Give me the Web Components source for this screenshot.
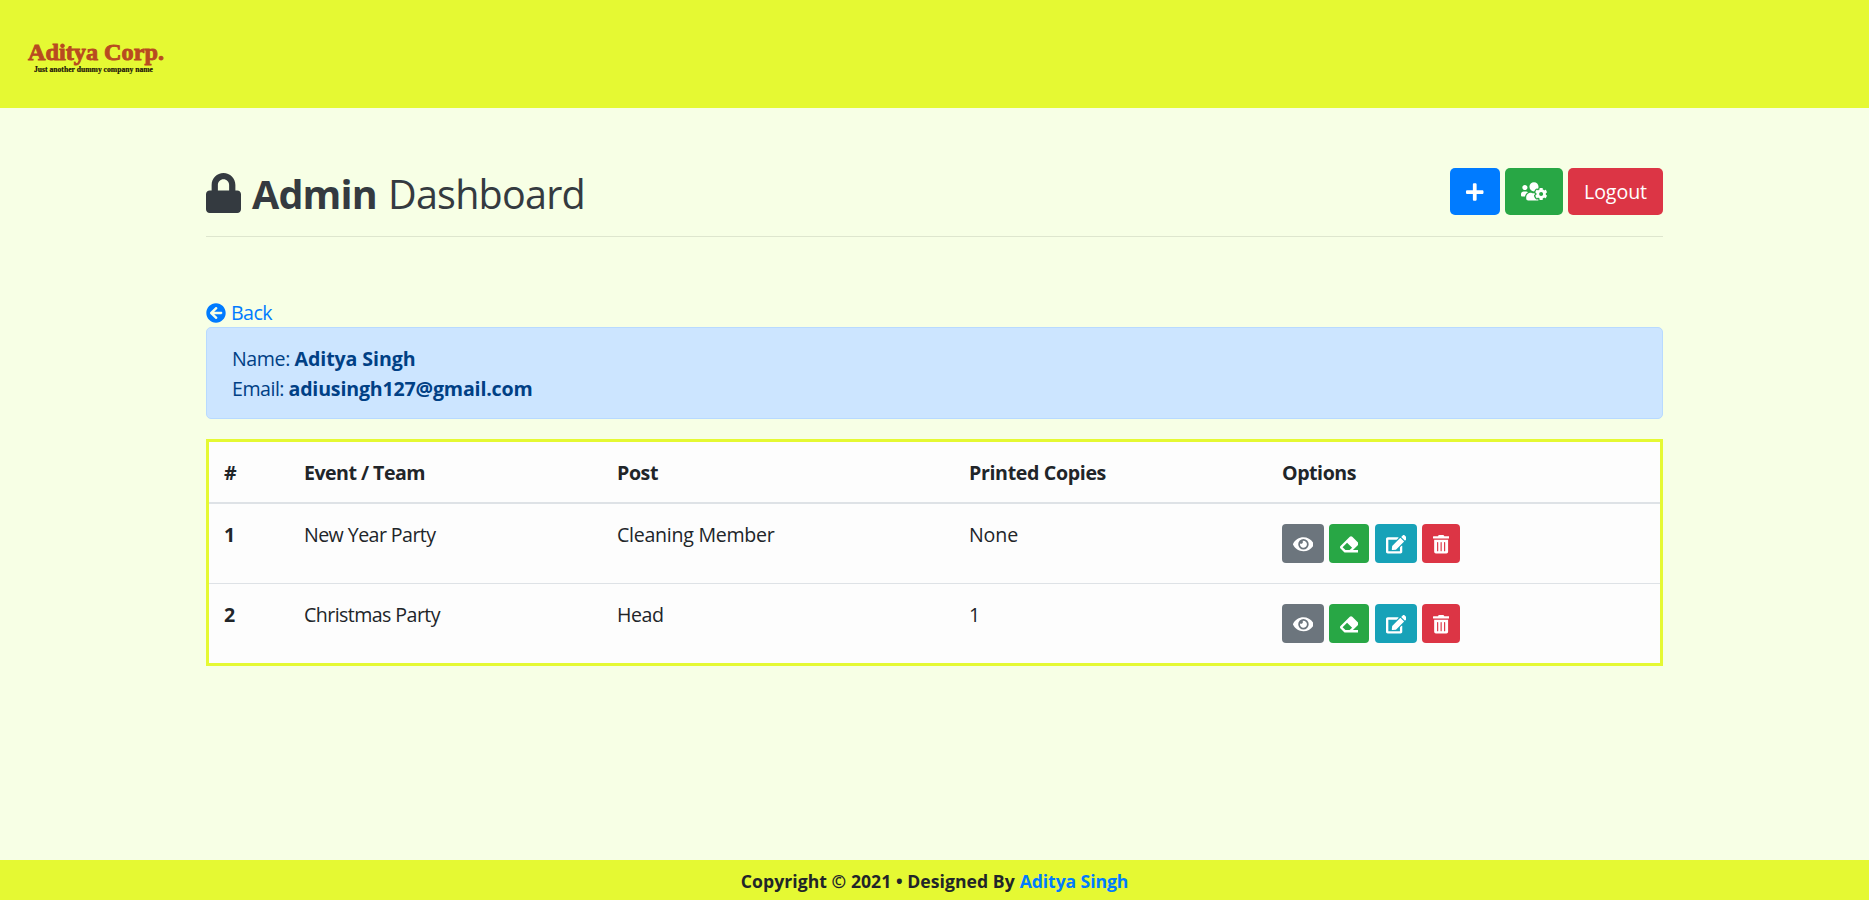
<!DOCTYPE html>
<html lang="en">
<head>
<meta charset="utf-8">
<title>Admin Dashboard</title>
<style>
html,body{margin:0;height:100%}
body{background:#f7ffe5;color:#212529;font:385 19.6px/30px "Open Sans","Noto Sans",sans-serif;overflow:hidden}
</style>
</head>
<body>
<admin-page></admin-page>
<script>
const define = (name, html, setup) => {
  const t = document.createElement('template');
  t.innerHTML = html;
  customElements.define(name, class extends HTMLElement {
    connectedCallback() {
      if (this.shadowRoot) return;
      this.attachShadow({mode: 'open'}).append(t.content.cloneNode(true));
      if (setup) setup(this, this.shadowRoot);
    }
  });
};

const icons = {
  lock: [448, 512, 'M400 224h-24v-72C376 68.2 307.800 0 224 0S72 68.200 72 152v72H48c-26.500 0-48 21.500-48 48v192c0 26.500 21.500 48 48 48h352c26.500 0 48-21.500 48-48V272c0-26.500-21.500-48-48-48zm-104 0H152v-72c0-39.700 32.300-72 72-72s72 32.300 72 72v72z'],
  plus: [448, 512, 'M416 208H272V64c0-17.670-14.330-32-32-32h-32c-17.670 0-32 14.330-32 32v144H32c-17.670 0-32 14.330-32 32v32c0 17.670 14.330 32 32 32h144v144c0 17.670 14.330 32 32 32h32c17.670 0 32-14.330 32-32V304h144c17.670 0 32-14.330 32-32v-32c0-17.670-14.330-32-32-32z'],
  users: [640, 512, 'M610.500 341.300c2.600-14.100 2.600-28.500 0-42.600l25.800-14.900c3-1.700 4.300-5.200 3.300-8.500-6.700-21.600-18.200-41.200-33.200-57.400-2.300-2.500-6-3.100-9-1.400l-25.800 14.900c-10.900-9.300-23.400-16.500-36.900-21.300v-29.800c0-3.400-2.400-6.400-5.700-7.100-22.300-5-45-4.800-66.200 0-3.300.7-5.700 3.700-5.700 7.100v29.800c-13.500 4.800-26 12-36.900 21.300l-25.800-14.900c-2.900-1.700-6.700-1.100-9 1.400-15 16.200-26.500 35.800-33.200 57.400-1 3.300.4 6.800 3.300 8.500l25.800 14.900c-2.600 14.100-2.600 28.500 0 42.600l-25.800 14.900c-3 1.700-4.300 5.200-3.300 8.500 6.700 21.600 18.200 41.100 33.200 57.400 2.300 2.500 6 3.100 9 1.400l25.800-14.900c10.900 9.300 23.400 16.500 36.900 21.300v29.800c0 3.400 2.400 6.400 5.700 7.100 22.300 5 45 4.800 66.200 0 3.300-.7 5.700-3.700 5.700-7.100v-29.800c13.500-4.800 26-12 36.900-21.300l25.800 14.900c2.900 1.700 6.700 1.100 9-1.400 15-16.200 26.500-35.800 33.200-57.400 1-3.300-.4-6.800-3.300-8.500l-25.800-14.900zM496 368.500c-26.800 0-48.500-21.800-48.500-48.500s21.800-48.500 48.500-48.500 48.500 21.800 48.500 48.500-21.700 48.500-48.500 48.500zM96 224c35.300 0 64-28.700 64-64s-28.700-64-64-64-64 28.700-64 64 28.700 64 64 64zm224 32c1.900 0 3.700-.5 5.600-.6 8.300-21.700 20.500-42.100 36.300-59.200 7.400-8 17.900-12.600 28.900-12.600 6.900 0 13.700 1.800 19.600 5.300l7.900 4.600c.8-.5 1.600-.9 2.400-1.400 7-14.600 11.200-30.800 11.200-48 0-61.900-50.100-112-112-112S208 82.100 208 144c0 61.900 50.100 112 112 112zm105.200 194.500c-2.300-1.200-4.600-2.600-6.800-3.900-8.200 4.800-15.300 9.800-27.500 9.800-10.900 0-21.400-4.600-28.900-12.600-18.300-19.800-32.300-43.900-40.200-69.600-10.700-34.500 24.900-49.700 25.800-50.300-.1-2.600-.1-5.200 0-7.800l-7.900-4.600c-3.800-2.200-7-5-9.800-8.100-3.300.2-6.500.6-9.800.6-24.600 0-47.600-6-68.500-16h-8.300C179.600 288 128 339.600 128 403.200V432c0 26.500 21.500 48 48 48h255.400c-3.700-6-6.200-12.800-6.200-20.300v-9.200zM173.100 274.600C161.500 263.100 145.600 256 128 256H64c-35.300 0-64 28.700-64 64v32c0 17.700 14.300 32 32 32h65.900c6.300-47.400 34.900-87.300 75.200-109.400z'],
  back: [512, 512, 'M256 504C119 504 8 393 8 256S119 8 256 8s248 111 248 248-111 248-248 248zm28.900-143.600L209.400 288H392c13.300 0 24-10.700 24-24v-16c0-13.300-10.700-24-24-24H209.400l75.500-72.400c9.700-9.300 9.900-24.800.4-34.300l-11-10.900c-9.400-9.400-24.600-9.400-33.900 0L107.700 239c-9.400 9.400-9.400 24.600 0 33.900l132.700 132.700c9.400 9.400 24.600 9.400 33.900 0l11-10.900c9.500-9.500 9.300-25-.4-34.300z'],
  eye: [576, 512, 'M572.520 241.400C518.290 135.590 410.930 64 288 64S57.680 135.640 3.480 241.410a32.350 32.350 0 0 0 0 29.190C57.710 376.410 165.070 448 288 448s230.320-71.640 284.520-177.410a32.350 32.350 0 0 0 0-29.190zM288 400a144 144 0 1 1 144-144 143.930 143.930 0 0 1-144 144zm0-240a95.310 95.310 0 0 0-25.310 3.790 47.850 47.850 0 0 1-66.900 66.900A95.780 95.780 0 1 0 288 160z'],
  eraser: [512, 512, 'M497.941 273.941c18.745-18.745 18.745-49.137 0-67.882l-160-160c-18.745-18.745-49.136-18.746-67.883 0l-256 256c-18.745 18.745-18.745 49.137 0 67.882l96 96A48.004 48.004 0 0 0 144 480h356c6.627 0 12-5.373 12-12v-40c0-6.627-5.373-12-12-12H355.883l142.058-142.059zm-302.627-62.627l137.373 137.373L265.373 416H150.628l-80-80 124.686-124.686z'],
  edit: [576, 512, 'M402.600 83.200l90.200 90.200c3.800 3.800 3.800 10 0 13.800L274.400 405.600l-92.800 10.300c-12.400 1.400-22.900-9.100-21.500-21.500l10.300-92.800L388.800 83.200c3.800-3.800 10-3.800 13.800 0zm162-22.900l-48.800-48.800c-15.200-15.200-39.900-15.200-55.200 0l-35.400 35.400c-3.800 3.800-3.800 10 0 13.800l90.200 90.200c3.800 3.800 10 3.800 13.800 0l35.400-35.400c15.200-15.300 15.200-40 0-55.200zM384 346.200V448H64V128h229.800c3.200 0 6.200-1.300 8.500-3.500l40-40c7.600-7.600 2.200-20.500-8.500-20.500H48C21.500 64 0 85.500 0 112v352c0 26.500 21.500 48 48 48h352c26.500 0 48-21.500 48-48V306.200c0-10.700-12.900-16-20.500-8.500l-40 40c-2.200 2.300-3.500 5.300-3.500 8.500z'],
  trash: [448, 512, 'M32 464a48 48 0 0 0 48 48h288a48 48 0 0 0 48-48V128H32zm272-256a16 16 0 0 1 32 0v224a16 16 0 0 1-32 0zm-96 0a16 16 0 0 1 32 0v224a16 16 0 0 1-32 0zm-96 0a16 16 0 0 1 32 0v224a16 16 0 0 1-32 0zM432 32H312l-9.400-18.700A24 24 0 0 0 281.100 0H166.800a23.720 23.720 0 0 0-21.400 13.300L136 32H16A16 16 0 0 0 0 48v32a16 16 0 0 0 16 16h416a16 16 0 0 0 16-16V48a16 16 0 0 0-16-16z']
};

define('ui-icon', `<style>:host{display:inline-block;flex:none}svg{display:block;height:var(--size,20px);fill:currentColor}</style>`, (el, root) => {
  const [w, h, d] = icons[el.getAttribute('name')];
  const s = document.createElement('span');
  s.innerHTML = `<svg viewBox="0 0 ${w} ${h}"><path d="${d}"/></svg>`;
  root.append(s.firstChild);
});

/* Text run tracked so that its advance equals the w attribute. */
define('ui-text', `<style>:host{display:inline-block;white-space:nowrap}</style><slot></slot>`, el => {
  const w = +el.getAttribute('w');
  el.style.letterSpacing = (w - el.getBoundingClientRect().width) / el.textContent.length + 'px';
});

define('ui-button', `<style>
:host{display:flex;align-items:center;justify-content:center;box-sizing:border-box;color:#fff;border-radius:5px;height:47px;font-weight:400;background:#007bff}
:host([kind=success]){background:#28a745}:host([kind=danger]){background:#dc3545}
:host([kind=secondary]){background:#6c757d}:host([kind=info]){background:#17a2b8}
:host([small]){height:39px;--size:18.6px;border-radius:4px;padding-top:2px}
</style><slot></slot>`);

define('site-header', `<style>:host{display:block;height:108px;background:#e5f933}svg{display:block}
.a{font:bold 24px "Liberation Serif",serif;fill:#b84a20;stroke:#b84a20;stroke-width:.9}
.b{font:bold 8px "Liberation Serif",serif;fill:#1a1208;stroke:#1a1208;stroke-width:.2}</style>
<svg width="200" height="108"><text class="a" x="28" y="60" textLength="136" lengthAdjust="spacingAndGlyphs">Aditya Corp.</text><text class="b" x="34" y="71.500" textLength="119" lengthAdjust="spacingAndGlyphs">Just another dummy company name</text></svg>`);

define('title-bar', `<style>
:host{display:flex;justify-content:space-between;height:68px;border-bottom:1px solid #dee6ce;box-sizing:content-box}
h1{margin:0;display:flex;color:#343a40;font-size:39.500px;font-weight:500;line-height:52px;--size:40px}
h1 ui-icon{margin:5px 11px 0 0}b{font-weight:700;margin-right:11px}
nav{display:flex;gap:5px}.p{width:50px}.u{width:58px;--size:20.800px}.l{width:95px}
</style><h1><ui-icon name="lock"></ui-icon><b><ui-text w="125">Admin</ui-text></b><ui-text w="197">Dashboard</ui-text></h1>
<nav><ui-button class="p"><ui-icon name="plus"></ui-icon></ui-button><ui-button class="u" kind="success"><ui-icon name="users"></ui-icon></ui-button><ui-button class="l" kind="danger"><ui-text w="63">Logout</ui-text></ui-button></nav>`);

define('back-link', `<style>:host{display:flex;align-items:center;gap:5px;height:30px;color:#007bff}</style><ui-icon name="back"></ui-icon><ui-text w="41">Back</ui-text>`);

define('user-card', `<style>:host{display:block;box-sizing:border-box;height:92px;padding:16px 25px 15px;border:1px solid #b8daff;border-radius:5px;background:#cce5ff;color:#004085}
div{display:flex;gap:4.500px;height:30px}b{font-weight:700}</style>
<div><ui-text w="58">Name:</ui-text><b><ui-text w="121">Aditya Singh</ui-text></b></div>
<div><ui-text w="52">Email:</ui-text><b><ui-text w="244">adiusingh127@gmail.com</ui-text></b></div>`);

define('table-row', `<style>:host{display:grid;grid-template-columns:80px 313px 352px 313px 1fr;box-sizing:border-box;height:80px;padding:16px 15px 0;border-top:1px solid #dee2e6}
:host([head]){height:62px;font-weight:700;border:0;border-bottom:2px solid #dee2e6;padding-top:15.500px}
:host([first]){border-top:0;height:79px;padding-top:16px}</style><slot></slot>`);

define('row-actions', `<style>:host{display:flex;gap:5px;padding-top:4px}.a{width:42px}.b{width:40px;margin-right:1px}.d{width:38px}</style>
<ui-button small class="a" kind="secondary"><ui-icon name="eye"></ui-icon></ui-button><ui-button small class="b" kind="success"><ui-icon name="eraser"></ui-icon></ui-button><ui-button small class="a" kind="info"><ui-icon name="edit"></ui-icon></ui-button><ui-button small class="d" kind="danger"><ui-icon name="trash"></ui-icon></ui-button>`);

define('event-table', `<style>:host{display:block;box-sizing:border-box;height:227px;border:3px solid #e5f933;background:#fdfdfd}b{font-weight:700}</style>
<table-row head><span><ui-text w="12">#</ui-text></span><span><ui-text w="121">Event / Team</ui-text></span><span><ui-text w="41">Post</ui-text></span><span><ui-text w="137">Printed Copies</ui-text></span><span><ui-text w="74">Options</ui-text></span></table-row>
<table-row first><b>1</b><span><ui-text w="131.500">New Year Party</ui-text></span><span><ui-text w="157.500">Cleaning Member</ui-text></span><span><ui-text w="49">None</ui-text></span><row-actions></row-actions></table-row>
<table-row><b>2</b><span><ui-text w="136">Christmas Party</ui-text></span><span><ui-text w="46.500">Head</ui-text></span><span>1</span><row-actions></row-actions></table-row>`);

define('site-footer', `<style>:host{display:flex;justify-content:center;gap:5px;height:40px;background:#e5f933;font-size:17.600px;font-weight:700;line-height:43px}a{color:#007bff}</style>
<ui-text w="274">Copyright © 2021 • Designed By</ui-text><a><ui-text w="108.500">Aditya Singh</ui-text></a>`);

define('admin-page', `<style>:host{display:flex;flex-direction:column;height:900px}main{flex:1;padding:60px 206px 0}back-link{margin-top:61px}user-card{margin-top:-1px}event-table{margin-top:20px}</style>
<site-header></site-header><main><title-bar></title-bar><back-link></back-link><user-card></user-card><event-table></event-table></main><site-footer></site-footer>`);
</script>
</body>
</html>
